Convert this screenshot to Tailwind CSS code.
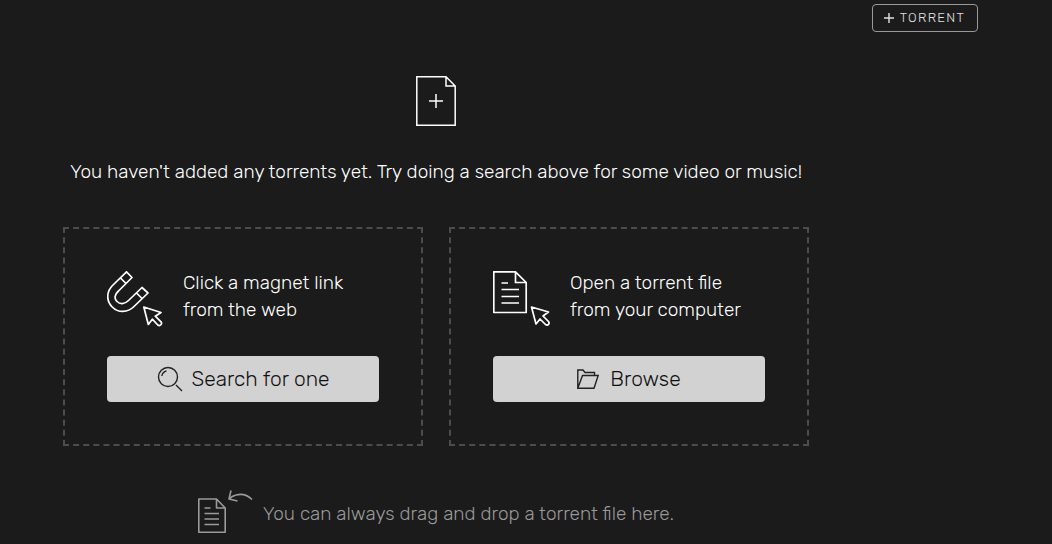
<!DOCTYPE html>
<html lang="en">
<head>
<meta charset="utf-8">
<meta name="viewport" content="width=device-width, initial-scale=1">
<title>Torrents</title>
<script src="https://cdn.jsdelivr.net/npm/@tailwindcss/browser@4"></script>
</head>
<body class="min-h-screen overflow-x-hidden bg-[#1b1b1b] font-['Rubik','Inter',sans-serif] font-light text-white">
<header class="flex justify-end pt-1 pr-[74px]">
  <button type="button" class="flex h-7 items-center gap-[6px] rounded border border-[#999] pr-3 pl-[11px] text-[13px] font-light tracking-widest text-[#e0e0e0]">
    <svg class="size-[10px]" viewBox="0 0 10 10" fill="none" stroke="currentColor" stroke-width="1.4" aria-hidden="true"><path d="M5 0v10M0 5h10"/></svg>
    <span>TORRENT</span>
  </button>
</header>
<main class="mr-[180px] flex flex-col items-center">
  <svg class="mt-11 h-[50px] w-10" viewBox="0 0 40 50" fill="none" stroke="#fff" stroke-width="1.5" aria-hidden="true">
    <path d="M.8.8H30L39.2 10V49.2H.8zM30 .8V10h9.2M20 18v14M13 25h14"/>
  </svg>
  <p class="mt-8 text-[19px] leading-7">You haven't added any torrents yet. Try doing a search above for some video or music!</p>
  <div class="mt-[41px] flex gap-[26px]">
    <section class="flex w-[360px] flex-col border-2 border-dashed border-[#4c4c4c] px-[42px] pt-10 pb-[42px]">
      <div class="flex items-start gap-5">
        <svg class="mt-[2px] h-14 w-14 shrink-0" viewBox="0 0 56 56" fill="none" stroke="#fff" stroke-width="1.7" stroke-linejoin="round" aria-hidden="true">
          <path d="M19.5.8 5.500 14.500C-.8 21-.8 30 5.200 36S20.500 42 27 35.500L41 22 35 16.500 21.500 29.500C17.500 33.500 13 33.500 10 30.500S7.500 23.500 11.500 20L25 6.500zM13.500 7 19 12.500M29.500 22 35.500 28"/>
          <path d="M36.800 36 41.300 53.500 45.300 48.200 50.800 54C53.300 55.500 55.500 53 54 50.800L48.300 45.200 54 41.500z"/>
        </svg>
        <p class="text-[19px] leading-[27px]">Click a magnet link<br>from the web</p>
      </div>
      <button type="button" class="mt-[29px] flex h-[46px] items-center justify-center gap-[9px] rounded bg-[#d2d2d2] text-[21px] font-light text-[#111]">
        <svg class="size-[26px]" viewBox="0 0 26 26" fill="none" stroke="#222" stroke-width="1.4" aria-hidden="true"><circle cx="11" cy="11" r="9.500"/><path d="M4.800 10Q5.500 6 9.500 4.800M19 19l6 6"/></svg>
        <span>Search for one</span>
      </button>
    </section>
    <section class="flex w-[360px] flex-col border-2 border-dashed border-[#4c4c4c] px-[42px] pt-10 pb-[42px]">
      <div class="flex items-start gap-5">
        <svg class="mt-[2px] h-14 w-[57px] shrink-0" viewBox="0 0 57 56" fill="none" stroke="#fff" stroke-width="1.7" stroke-linejoin="round" aria-hidden="true">
          <path d="M.8.8H22.500L33.200 11.500V41.500H.8zM22.500 .8V11.500H33.200M8.500 12H15M8.500 18.500H26M8.500 25.500H26M8.500 32H26"/>
          <path d="M38.500 36 43 53 47 48 52.500 53.500C55 55 57 52.500 55.500 50.500L50 45 55.500 41z"/>
        </svg>
        <p class="text-[19px] leading-[27px]">Open a torrent file<br>from your computer</p>
      </div>
      <button type="button" class="mt-[29px] flex h-[46px] items-center justify-center gap-[11px] rounded bg-[#d2d2d2] text-[21px] font-light text-[#111]">
        <svg class="h-5 w-[22px]" viewBox="0 0 22 20" fill="none" stroke="#222" stroke-width="1.400" aria-hidden="true"><path d="M.8 19.200V1H6L8 3.500H17.500V6.500M.8 19.200 5.500 6.500H21.200L17 19.200z"/></svg>
        <span>Browse</span>
      </button>
    </section>
  </div>
  <div class="mt-11 flex items-end gap-[10px] text-[#999]">
    <svg class="h-11 w-[55px]" viewBox="0 0 55 44" fill="none" stroke="#9a9a9a" stroke-width="1.600" stroke-linejoin="round" aria-hidden="true">
      <path d="M.8 9H18.500L27.200 18V42.200H.8zM18.500 9V18H27.200M6.500 18H12.500M6.500 23.500H21M6.500 29H21M6.500 34.500H21"/>
      <path d="M54 9.500Q47 2.500 38 5Q34 6 31 9M33 .5 31 9 39.500 11"/>
    </svg>
    <p class="pb-[6px] text-[19px] leading-7">You can always drag and drop a torrent file here.</p>
  </div>
</main>
</body>
</html>
